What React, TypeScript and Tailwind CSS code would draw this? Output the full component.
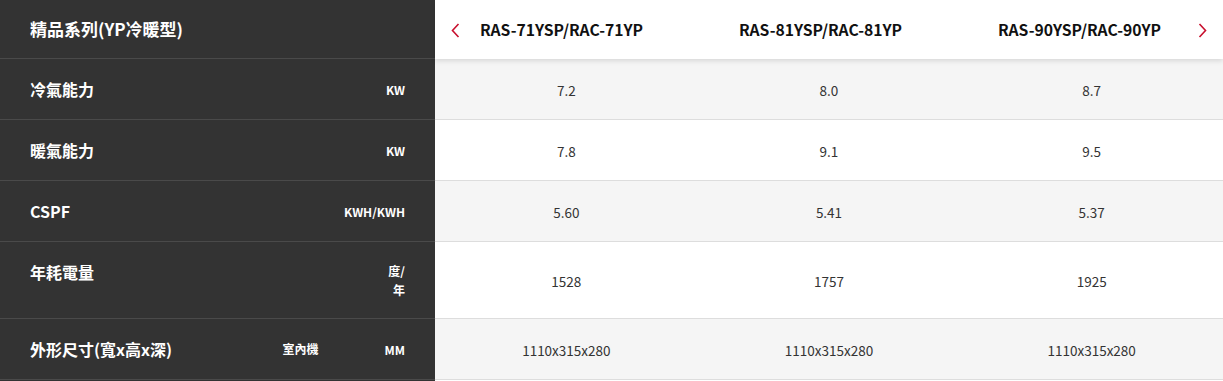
const models = ['RAS-71YSP/RAC-71YP', 'RAS-81YSP/RAC-81YP', 'RAS-90YSP/RAC-90YP'];

interface SpecRow {
  label: string;
  sub?: string;
  unit: React.ReactNode;
  values: string[];
  tall?: boolean;
}

const rows: SpecRow[] = [
  { label: '冷氣能力', unit: 'KW', values: ['7.2', '8.0', '8.7'] },
  { label: '暖氣能力', unit: 'KW', values: ['7.8', '9.1', '9.5'] },
  { label: 'CSPF', unit: 'KWH/KWH', values: ['5.60', '5.41', '5.37'] },
  {
    label: '年耗電量',
    unit: (
      <>
        度/
        <br />
        年
      </>
    ),
    values: ['1528', '1757', '1925'],
    tall: true,
  },
  { label: '外形尺寸(寬x高x深)', sub: '室內機', unit: 'MM', values: ['1110x315x280', '1110x315x280', '1110x315x280'] },
];

const font = { fontFamily: '"Noto Sans CJK TC", "Noto Sans", sans-serif' };

export default function App() {
  return (
    <div className="flex w-[1223px] h-[381px] bg-white overflow-hidden" style={font}>
      {/* left dark label column */}
      <div className="w-[435px] shrink-0 bg-[#333333] text-white">
        <div className="h-[59px] border-b border-[#4a4a4a] flex items-center pl-[30px] text-[17px] font-bold">
          精品系列(YP冷暖型)
        </div>
        {rows.map((row) => (
          <div
            key={row.label}
            className={`flex border-b border-[#4a4a4a] pl-[30px] pr-[30px] ${row.tall ? 'h-[77px] pt-[19px]' : 'h-[61px] items-center'}`}
          >
            <div className="flex-1 text-[16px] font-bold leading-[22px]">{row.label}</div>
            {row.sub && <div className="w-[102px] text-[12px] font-bold leading-[18px]">{row.sub}</div>}
            <div className="text-right text-[12px] font-bold leading-[19px]">{row.unit}</div>
          </div>
        ))}
      </div>

      {/* right value columns */}
      <div className="flex-1 flex flex-col">
        <div className="relative z-10 h-[59px] flex items-center bg-white shadow-[0_2px_5px_rgba(0,0,0,0.12)]">
          <div className="grid grid-cols-3 w-[777px] -ml-[3px]">
            {models.map((m) => (
              <div key={m} className="text-center text-[15.7px] font-bold text-[#111111]">
                {m}
              </div>
            ))}
          </div>
          <svg className="absolute left-[16px] top-[23px]" width="9" height="15" viewBox="0 0 9 15" fill="none">
            <path d="M7.5 1 L1.5 7.5 L7.5 14" stroke="#c8102e" strokeWidth="1.6" />
          </svg>
          <svg className="absolute right-[16px] top-[23px]" width="9" height="15" viewBox="0 0 9 15" fill="none">
            <path d="M1.5 1 L7.5 7.5 L1.5 14" stroke="#c8102e" strokeWidth="1.6" />
          </svg>
        </div>
        {rows.map((row, i) => (
          <div
            key={row.label}
            className={`grid grid-cols-3 items-center border-b border-[#dddddd] text-[13.5px] text-[#333333] ${row.tall ? 'h-[77px]' : 'h-[61px]'} ${i % 2 === 0 ? 'bg-[#f5f5f5]' : 'bg-white'}`}
          >
            {row.values.map((v, j) => (
              <div key={j} className="text-center pt-[2px]">
                {v}
              </div>
            ))}
          </div>
        ))}
      </div>
    </div>
  );
}
